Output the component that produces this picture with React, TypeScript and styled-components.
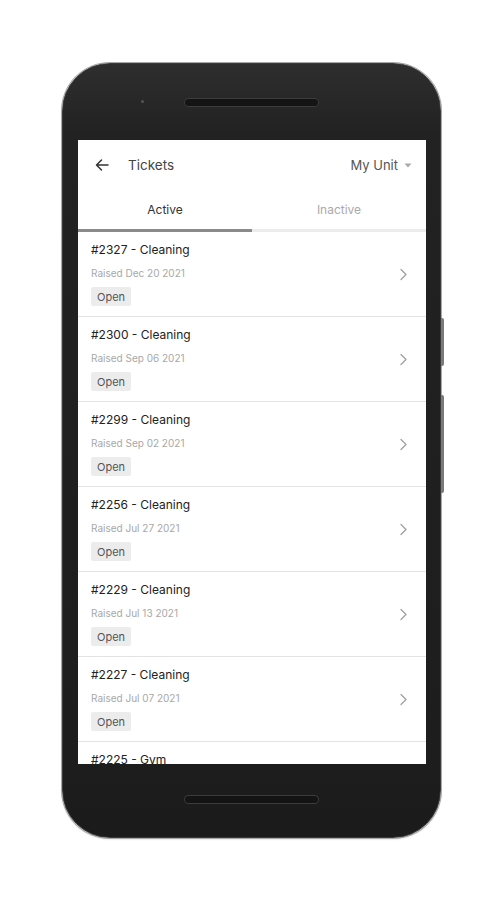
import React from "react";
import styled, { createGlobalStyle } from "styled-components";

const Global = createGlobalStyle`
  html, body { margin: 0; padding: 0; background: #ffffff; }
  body { font-family: Inter, "Noto Sans", Roboto, sans-serif; }
`;

const Page = styled.div`
  width: 504px;
  height: 900px;
  padding: 63px 0 0 62px;
  box-sizing: border-box;
`;

const Phone = styled.div`
  position: relative;
  width: 379px;
  height: 775px;
  box-sizing: border-box;
  border-radius: 48px;
  background: linear-gradient(180deg, #2e2e2e 0%, #222 9%, #1d1d1d 90%, #1b1b1b 100%);
  border: 1px solid #3a3a3a;
  box-shadow: 0 0 0 1px #a8a8a8, 0 1px 2px rgba(0, 0, 0, 0.25);
  display: flex;
  flex-direction: column;
`;

const Bezel = styled.div<{ $h: number }>`
  position: relative;
  height: ${(p) => p.$h}px;
  flex: none;
  display: flex;
  align-items: center;
  justify-content: center;
`;

const Speaker = styled.div<{ $offset: number }>`
  width: 135px;
  height: 9px;
  margin-top: ${(p) => p.$offset}px;
  border-radius: 5px;
  background: #141414;
  box-shadow: inset 0 0 0 1px #3c3c3c;
`;

const Camera = styled.div`
  position: absolute;
  left: 78px;
  top: 36px;
  width: 3px;
  height: 3px;
  border-radius: 50%;
  background: #555;
`;

const SideButton = styled.div<{ $top: number; $h: number }>`
  position: absolute;
  right: -4px;
  top: ${(p) => p.$top}px;
  width: 3px;
  height: ${(p) => p.$h}px;
  background: #7a7a7a;
  border-radius: 0 2px 2px 0;
`;

const Screen = styled.div`
  height: 624px;
  margin: 0 14px 0 15px;
  background: #ffffff;
  overflow: hidden;
  flex: none;
  display: flex;
  flex-direction: column;
`;

const Header = styled.div`
  height: 50px;
  flex: none;
  display: flex;
  align-items: center;
  padding: 0 14px 0 16px;
`;

const Title = styled.div`
  margin-left: 18px;
  font-size: 13.5px;
  color: #444;
  flex: 1;
`;

const UnitSelect = styled.div`
  display: flex;
  align-items: center;
  gap: 6px;
  font-size: 13px;
  color: #555;
`;

const Tabs = styled.div`
  height: 42px;
  flex: none;
  display: flex;
  border-bottom: 3px solid #ececec;
  box-sizing: border-box;
  position: relative;
`;

const Tab = styled.div<{ $active?: boolean }>`
  flex: 1;
  display: flex;
  align-items: center;
  justify-content: center;
  font-size: 12px;
  color: ${(p) => (p.$active ? "#333" : "#aaa")};
  position: relative;
  &::after {
    content: "";
    position: absolute;
    left: 0;
    right: 0;
    bottom: -3px;
    height: 3px;
    background: ${(p) => (p.$active ? "#8a8a8a" : "transparent")};
  }
`;

const List = styled.div`
  display: flex;
  flex-direction: column;
`;

const Row = styled.div`
  display: flex;
  align-items: center;
  padding: 10px 18px 10px 13px;
  border-bottom: 1px solid #e3e3e3;
  flex: none;
`;

const RowBody = styled.div`
  flex: 1;
  display: flex;
  flex-direction: column;
  align-items: flex-start;
`;

const RowTitle = styled.div`
  font-size: 12px;
  line-height: 16px;
  color: #222;
`;

const RowDate = styled.div`
  margin-top: 8px;
  font-size: 10px;
  line-height: 14px;
  color: #a8a8a8;
`;

const Badge = styled.div`
  margin-top: 7px;
  height: 19px;
  padding: 0 6px;
  display: flex;
  align-items: center;
  background: #ececec;
  border-radius: 2px;
  font-size: 11px;
  color: #555;
`;

const tickets = [
  { id: "#2327 - Cleaning", date: "Raised Dec 20 2021" },
  { id: "#2300 - Cleaning", date: "Raised Sep 06 2021" },
  { id: "#2299 - Cleaning", date: "Raised Sep 02 2021" },
  { id: "#2256 - Cleaning", date: "Raised Jul 27 2021" },
  { id: "#2229 - Cleaning", date: "Raised Jul 13 2021" },
  { id: "#2227 - Cleaning", date: "Raised Jul 07 2021" },
  { id: "#2225 - Gym", date: "Raised Jul 01 2021" },
];

const BackArrow = () => (
  <svg width="16" height="16" viewBox="0 0 16 16" fill="none">
    <path d="M14 8H2.5M7.5 3L2.5 8L7.5 13" stroke="#333" strokeWidth="1.5" strokeLinecap="round" strokeLinejoin="round" />
  </svg>
);

const Caret = () => (
  <svg width="8" height="5" viewBox="0 0 8 5">
    <path d="M0.5 0.5H7.5L4 4.5Z" fill="#aaa" />
  </svg>
);

const Chevron = () => (
  <svg width="9" height="13" viewBox="0 0 9 13" fill="none">
    <path d="M2 1.5L7 6.5L2 11.5" stroke="#a0a0a0" strokeWidth="1.3" strokeLinecap="round" strokeLinejoin="round" />
  </svg>
);

export default function App() {
  return (
    <>
      <Global />
      <Page>
        <Phone>
          <SideButton $top={254} $h={48} />
          <SideButton $top={331} $h={98} />
          <Bezel $h={76}>
            <Camera />
            <Speaker $offset={0} />
          </Bezel>
          <Screen>
            <Header>
              <BackArrow />
              <Title>Tickets</Title>
              <UnitSelect>
                My Unit <Caret />
              </UnitSelect>
            </Header>
            <Tabs>
              <Tab $active>Active</Tab>
              <Tab>Inactive</Tab>
            </Tabs>
            <List>
              {tickets.map((t) => (
                <Row key={t.id}>
                  <RowBody>
                    <RowTitle>{t.id}</RowTitle>
                    <RowDate>{t.date}</RowDate>
                    <Badge>Open</Badge>
                  </RowBody>
                  <Chevron />
                </Row>
              ))}
            </List>
          </Screen>
          <Bezel $h={73}>
            <Speaker $offset={-2} />
          </Bezel>
        </Phone>
      </Page>
    </>
  );
}
